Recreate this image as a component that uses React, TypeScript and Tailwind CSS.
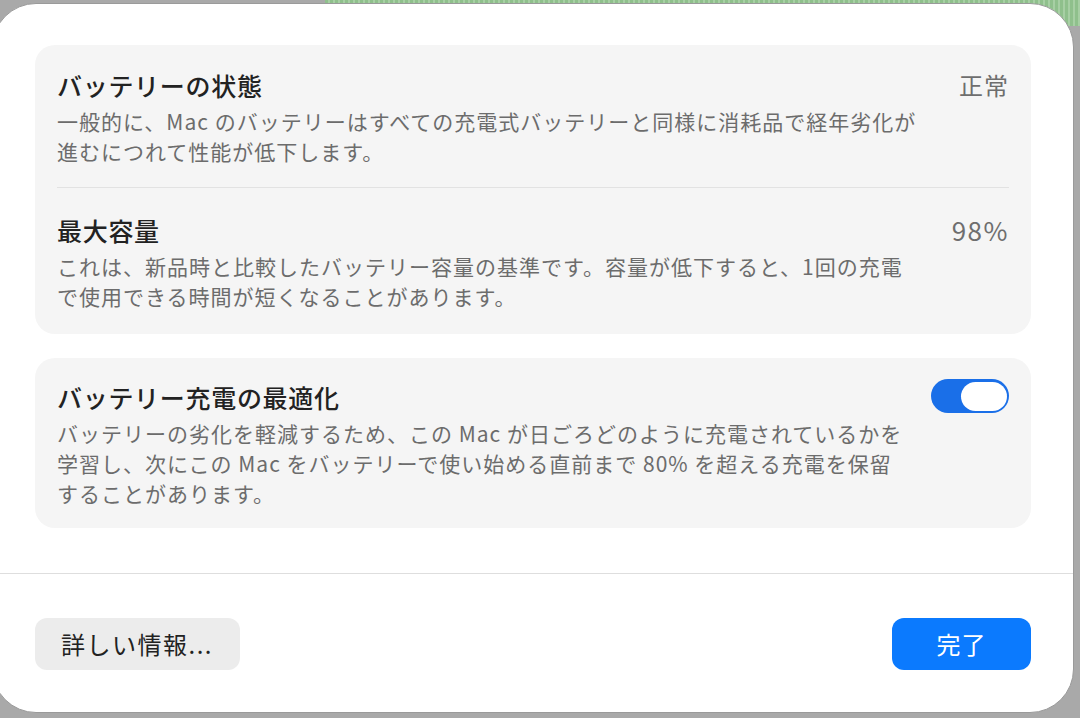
import React from 'react'

const FONT = { fontFamily: '"Noto Sans CJK JP", "Noto Sans", sans-serif' }

function Row({
  title,
  lines,
  right,
}: {
  title: string
  lines: string[]
  right?: React.ReactNode
}) {
  return (
    <div className="flex items-start justify-between gap-4">
      <div className="min-w-0">
        <div className="text-[25px] leading-[34px] font-medium tracking-[0.7px] text-[#222222]">{title}</div>
        <div className="mt-[4px] text-[21px] leading-[30px] tracking-[1px] text-[#6c6c6c]">
          {lines.map((l, i) => (
            <div key={i} className="whitespace-nowrap">
              {l}
            </div>
          ))}
        </div>
      </div>
      {right}
    </div>
  )
}

function Toggle() {
  return (
    <div className="mt-[-1px] flex h-[34px] w-[78px] shrink-0 items-center justify-end rounded-full bg-[#1a6fe8] pr-[2px]">
      <div className="h-[29px] w-[46px] rounded-full bg-white" />
    </div>
  )
}

export default function App() {
  return (
    <div className="relative h-[718px] w-[1080px] overflow-hidden bg-[#a9a9a9]" style={FONT}>
      {/* desktop behind the sheet */}
      <div className="absolute right-0 top-0 h-[26px] w-[755px] bg-[repeating-linear-gradient(90deg,#8fc08c_0px,#8fc08c_3px,#a7cfa4_3px,#a7cfa4_5px)]" />

      <div className="absolute left-[-8px] top-[3px] flex h-[710px] w-[1082px] flex-col rounded-[44px] border border-[#9a9a9a] bg-white">
        <div className="flex flex-col gap-[24px] px-[42px] pt-[41px]">
          {/* battery state + capacity */}
          <div className="rounded-[20px] bg-[#f5f5f5] px-[22px] pb-[23px] pt-[23px]">
            <Row
              title="バッテリーの状態"
              lines={[
                '一般的に、Mac のバッテリーはすべての充電式バッテリーと同様に消耗品で経年劣化が',
                '進むにつれて性能が低下します。',
              ]}
              right={<span className="text-[24px] leading-[34px] tracking-[1px] text-[#6e6e6e]">正常</span>}
            />
            <div className="mb-[25px] mt-[21px] h-px bg-[#e2e2e2]" />
            <Row
              title="最大容量"
              lines={[
                'これは、新品時と比較したバッテリー容量の基準です。容量が低下すると、1回の充電',
                'で使用できる時間が短くなることがあります。',
              ]}
              right={<span className="text-[26px] leading-[34px] tracking-[1.5px] text-[#6e6e6e]">98%</span>}
            />
          </div>

          {/* optimized charging */}
          <div className="rounded-[20px] bg-[#f5f5f5] px-[22px] pb-[20px] pt-[22px]">
            <Row
              title="バッテリー充電の最適化"
              lines={[
                'バッテリーの劣化を軽減するため、この Mac が日ごろどのように充電されているかを',
                '学習し、次にこの Mac をバッテリーで使い始める直前まで 80% を超える充電を保留',
                'することがあります。',
              ]}
              right={<Toggle />}
            />
          </div>
        </div>

        <div className="mt-[45px] h-px bg-[#dedede]" />

        <div className="flex items-center justify-between px-[42px] pt-[44px]">
          <button className="h-[52px] w-[205px] rounded-[12px] bg-[#ececec] pl-[26px] text-left text-[24px] tracking-[1.5px] text-[#222222]">
            詳しい情報...
          </button>
          <button className="h-[52px] w-[139px] rounded-[12px] bg-[#0b7afe] text-[24px] tracking-[1px] text-white">
            完了
          </button>
        </div>
      </div>
    </div>
  )
}
